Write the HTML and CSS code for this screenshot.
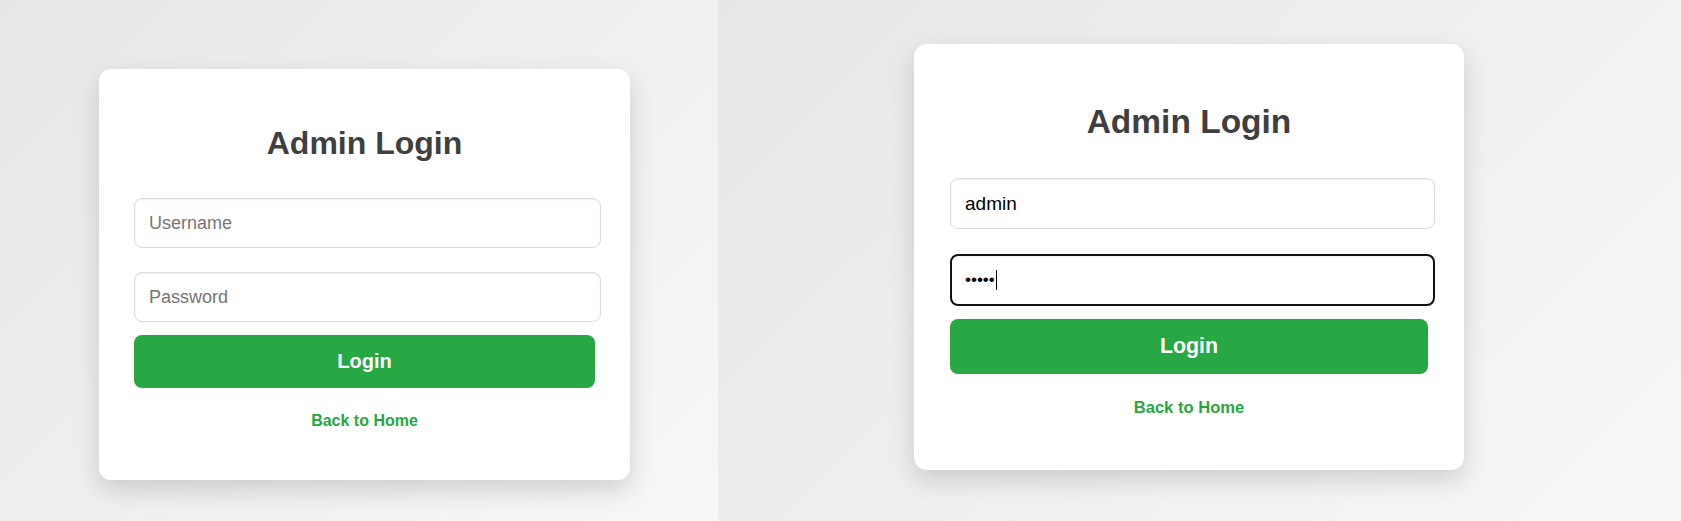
FILE: index.html
```html
<!DOCTYPE html>
<html lang="en">
<head>
<meta charset="utf-8">
<title>Admin Login</title>
<link rel="stylesheet" href="styles.css">
</head>
<body>
<div class="panes">
  <section class="pane pane-left">
    <div class="card">
      <h1 class="title">Admin Login</h1>
      <form class="form">
        <input class="field" type="text" placeholder="Username">
        <input class="field field-pass" type="password" placeholder="Password">
        <button class="btn" type="button">Login</button>
      </form>
      <a class="back" href="#">Back to Home</a>
    </div>
  </section>
  <section class="pane pane-right">
    <div class="card">
      <h1 class="title">Admin Login</h1>
      <form class="form">
        <input class="field" type="text" placeholder="Username" value="admin">
        <div class="field-wrap">
          <input class="field field-pass focused" type="password" placeholder="Password" value="admin">
          <span class="caret"></span>
        </div>
        <button class="btn" type="button">Login</button>
      </form>
      <a class="back" href="#">Back to Home</a>
    </div>
  </section>
</div>
</body>
</html>
```
FILE: styles.css
```css
* { box-sizing: border-box; }

html, body {
  margin: 0;
  padding: 0;
  width: 1681px;
  height: 521px;
  overflow: hidden;
  font-family: "Liberation Sans", Arial, sans-serif;
}

.panes {
  display: flex;
  height: 521px;
}

.pane {
  height: 521px;
  background: linear-gradient(135deg, #e7e7e7 0%, #f7f7f7 100%);
}

.pane-left {
  width: 718px;
  flex: none;
  padding: 69px 0 0 99px;
}

.pane-right {
  flex: 1;
  padding: 44px 0 0 196px;
}

.card {
  background: #fff;
  border-radius: 12px;
  box-shadow: 0 10px 25px rgba(0, 0, 0, 0.15);
  display: flex;
  flex-direction: column;
  align-items: flex-start;
}

.pane-left .card {
  width: 531px;
  height: 411px;
  padding: 35px 35px 0 35px;
}

.pane-right .card {
  width: 550px;
  height: 426px;
  padding: 36px 36px 0 36px;
  border-radius: 13px;
}

.title {
  margin: 0;
  width: 100%;
  text-align: center;
  color: #3f3f3f;
  font-weight: bold;
}

.pane-left .title {
  font-size: 32px;
  line-height: 37px;
  margin-top: 21px;
}

.pane-right .title {
  font-size: 33.5px;
  line-height: 38px;
  margin-top: 23px;
}

.form {
  display: flex;
  flex-direction: column;
  align-items: flex-start;
  width: 100%;
}

.field {
  display: block;
  border: 1px solid #dcdcdc;
  border-radius: 8px;
  background: #fff;
  box-shadow: inset 0 1px 2px rgba(0, 0, 0, 0.06);
  font-family: "Liberation Sans", Arial, sans-serif;
  color: #000;
  outline: none;
}

.field::placeholder { color: #767676; }

.pane-left .field {
  width: 467px;
  height: 50px;
  font-size: 18px;
  padding: 0 14px;
}

.pane-left .form { margin-top: 36px; }
.pane-left .field-pass { margin-top: 24px; }

.pane-right .form { margin-top: 37px; }

.pane-right .field {
  width: 485px;
  height: 51px;
  font-size: 19px;
  padding: 0 14px;
}

.field-wrap {
  position: relative;
  margin-top: 25px;
}

.pane-right .field.focused {
  height: 52px;
  border: 2px solid #111;
  padding: 0 13px;
  font-size: 17px;
}

.caret {
  position: absolute;
  left: 46px;
  top: 16px;
  width: 1px;
  height: 20px;
  background: #000;
}

.btn {
  display: block;
  width: 100%;
  border: none;
  border-radius: 8px;
  background: #28a745;
  color: #fff;
  font-family: "Liberation Sans", Arial, sans-serif;
  font-weight: bold;
  cursor: pointer;
}

.pane-left .btn {
  height: 53px;
  margin-top: 13px;
  font-size: 20px;
}

.pane-right .btn {
  height: 55px;
  margin-top: 13px;
  font-size: 21.4px;
}

.back {
  align-self: center;
  color: #28a745;
  font-weight: bold;
  text-decoration: none;
}

.pane-left .back {
  font-size: 16px;
  line-height: 18px;
  margin-top: 24px;
}

.pane-right .back {
  font-size: 16.6px;
  line-height: 19px;
  margin-top: 24px;
}
```
